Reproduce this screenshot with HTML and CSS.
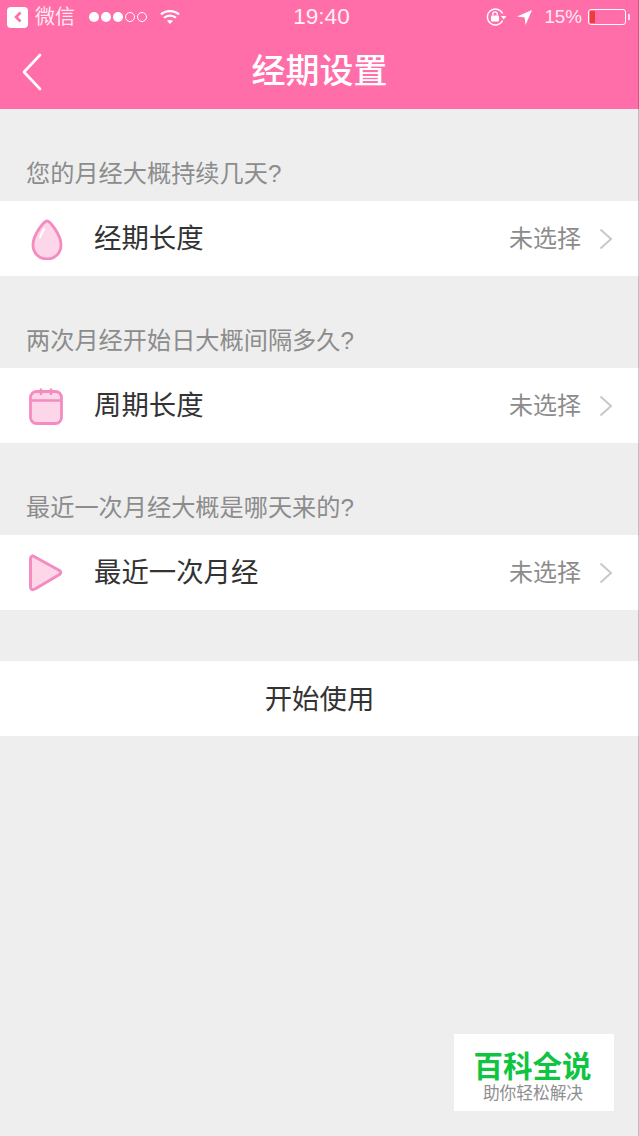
FILE: index.html
```html
<!DOCTYPE html>
<html lang="zh-CN">

<head>
    <meta charset="UTF-8">
    <meta name="viewport" content="width=device-width, initial-scale=1.0">
    <title>经期设置</title>
    <link rel="stylesheet" href="styles.css">
</head>

<body>
    <header class="top">
        <div class="status-bar">
            <div class="status-left">
                <span class="wechat-back">
                    <svg width="12" height="14" viewBox="0 0 12 14"><path d="M8.5 2.5 L4 7 L8.5 11.5" fill="none" stroke="#ff6ea9" stroke-width="2.6" /></svg>
                </span>
                <span class="app-name">微信</span>
                <span class="signal">
                    <i class="dot"></i><i class="dot"></i><i class="dot"></i><i class="dot off"></i><i class="dot off"></i>
                </span>
                <svg class="wifi" width="20" height="16" viewBox="0 0 20 16">
                    <path d="M1 5.4 C5.8 1 14.2 1 19 5.4" fill="none" stroke="#fff" stroke-width="2.2" />
                    <path d="M4 8.8 C7.4 5.8 12.6 5.8 16 8.8" fill="none" stroke="#fff" stroke-width="2.2" />
                    <path d="M7 11.8 C8.6 10.6 11.4 10.6 13 11.8 L10 15 Z" fill="#fff" />
                </svg>
            </div>
            <div class="status-time">19:40</div>
            <div class="status-right">
                <svg width="22" height="20" viewBox="0 0 22 20">
                    <path d="M17.6 6.5 A8 8 0 1 0 17.6 13.5" fill="none" stroke="#fff" stroke-width="1.4" />
                    <path d="M16 9 L21.5 9 L18.7 12.4 Z" fill="#fff" />
                    <rect x="6" y="8.5" width="8" height="6" rx="1" fill="#fff" />
                    <path d="M7.8 8.5 V7 A2.2 2.2 0 0 1 12.2 7 V8.5" fill="none" stroke="#fff" stroke-width="1.3" />
                </svg>
                <svg class="location" width="17" height="17" viewBox="0 0 17 17"><path d="M16 1 L1 7.6 L8.6 8.6 L9.6 16 Z" fill="#fff" /></svg>
                <span class="battery-text">15%</span>
                <span class="battery"><i class="battery-level"></i></span>
                <i class="battery-tip"></i>
            </div>
        </div>
        <nav class="nav-bar">
            <svg class="nav-back" width="24" height="40" viewBox="0 0 24 40"><path d="M20 3 L4 20 L20 37" fill="none" stroke="#fff" stroke-width="2.6" stroke-linecap="round" stroke-linejoin="round" /></svg>
            <h1 class="nav-title">经期设置</h1>
        </nav>
    </header>

    <main>
        <section>
            <p class="question">您的月经大概持续几天?</p>
            <div class="row">
                <svg class="row-icon" width="38" height="42" viewBox="0 0 38 42">
                    <path d="M22 3 C24.5 3 36 16 36 27 C36 35 30 41 22 41 C14 41 8 35 8 27 C8 16 19.5 3 22 3 Z" fill="#fdd6ea" stroke="#f48cc0" stroke-width="2.8" stroke-linejoin="round" />
                    <path d="M19 11 C17.5 13.5 15.8 16.5 15 19.5" fill="none" stroke="#fff" stroke-width="2" stroke-linecap="round" />
                </svg>
                <span class="row-name">经期长度</span>
                <span class="row-value">未选择</span>
                <svg class="chevron" width="14" height="22" viewBox="0 0 14 22"><path d="M1.5 1.5 L12 11 L1.5 20.5" fill="none" stroke="#c8c8c8" stroke-width="2" /></svg>
            </div>
        </section>

        <section>
            <p class="question">两次月经开始日大概间隔多久?</p>
            <div class="row">
                <svg class="row-icon" width="38" height="40" viewBox="0 0 38 40">
                    <rect x="5.5" y="5.5" width="31" height="32" rx="6" fill="#fdd6ea" stroke="#f48cc0" stroke-width="2.8" />
                    <path d="M5.5 14.5 H36.5 M16 2.5 V9 M26 2.5 V9" fill="none" stroke="#f48cc0" stroke-width="2.4" />
                </svg>
                <span class="row-name">周期长度</span>
                <span class="row-value">未选择</span>
                <svg class="chevron" width="14" height="22" viewBox="0 0 14 22"><path d="M1.5 1.5 L12 11 L1.5 20.5" fill="none" stroke="#c8c8c8" stroke-width="2" /></svg>
            </div>
        </section>

        <section>
            <p class="question">最近一次月经大概是哪天来的?</p>
            <div class="row">
                <svg class="row-icon" width="38" height="42" viewBox="0 0 38 42">
                    <path d="M5.5 7 Q5.5 2.5 10 5 L34.5 18.5 Q37 20.5 34.5 22.5 L10 37 Q5.5 39 5.5 35 Z" fill="#fdd6ea" stroke="#f48cc0" stroke-width="3" stroke-linejoin="round" />
                </svg>
                <span class="row-name">最近一次月经</span>
                <span class="row-value">未选择</span>
                <svg class="chevron" width="14" height="22" viewBox="0 0 14 22"><path d="M1.5 1.5 L12 11 L1.5 20.5" fill="none" stroke="#c8c8c8" stroke-width="2" /></svg>
            </div>
        </section>

        <button class="start-btn">开始使用</button>
    </main>

    <div class="watermark">
        <div class="watermark-title">百科全说</div>
        <div class="watermark-sub">助你轻松解决</div>
    </div>
</body>

</html>
```

FILE: styles.css
```css
* {
    margin: 0;
    padding: 0;
    box-sizing: border-box;
}

body {
    font-family: 'Liberation Sans', 'Noto Sans CJK SC', sans-serif;
    background: #eeeeee;
    color: #333;
    min-height: 1136px;
    overflow: hidden;
    position: relative;
}

/* thin grey edge down the right side of the screenshot */
body::after {
    content: '';
    position: absolute;
    top: 0;
    right: 0;
    bottom: 0;
    width: 1px;
    background: rgba(0, 0, 0, 0.2);
}

.top {
    background: #ff6ea9;
    color: white;
    height: 109px;
}

.status-bar {
    height: 34px;
    display: flex;
    align-items: center;
    justify-content: space-between;
    padding: 0 9px 0 7px;
    position: relative;
}

.status-left,
.status-right {
    display: flex;
    align-items: center;
}

.wechat-back {
    width: 21px;
    height: 21px;
    border-radius: 4px;
    background: #fff;
    display: flex;
    align-items: center;
    justify-content: center;
}

.app-name {
    font-size: 20px;
    line-height: 24px;
    margin-left: 7px;
    opacity: 0.85;
}

.signal {
    display: flex;
    gap: 2px;
    margin-left: 14px;
    margin-right: 13px;
}

.dot {
    width: 10px;
    height: 10px;
    border-radius: 50%;
    background: #fff;
}

.dot.off {
    background: none;
    border: 1px solid #fff;
}

.status-time {
    position: absolute;
    left: 4px;
    right: 0;
    text-align: center;
    font-size: 22.5px;
    opacity: 0.9;
}

.status-right svg {
    margin-right: 9px;
}

.status-right .location {
    margin-right: 11px;
}

.battery-text {
    font-size: 18.8px;
    margin-right: 6px;
    opacity: 0.85;
}

.battery {
    width: 38px;
    height: 16px;
    border: 1px solid #fff;
    border-radius: 3px;
    padding: 1px;
    display: block;
}

.battery-level {
    display: block;
    width: 5px;
    height: 100%;
    background: #ee3b3b;
}

.battery-tip {
    width: 2px;
    height: 6px;
    margin-left: 2px;
    background: #fff;
    opacity: 0.8;
}

.nav-bar {
    height: 75px;
    display: flex;
    align-items: center;
    justify-content: center;
    position: relative;
}

.nav-back {
    position: absolute;
    left: 20px;
    top: 18px;
}

.nav-title {
    font-size: 34px;
    font-weight: 500;
    line-height: 1;
    padding-bottom: 2px;
}

.question {
    height: 92px;
    padding: 0 26px 13px;
    display: flex;
    align-items: flex-end;
    font-size: 24.2px;
    line-height: 28px;
    color: #8c8c8c;
}

.row {
    height: 75px;
    background: #fff;
    display: flex;
    align-items: center;
    padding: 0 26px 0 25px;
}

.row-icon {
    flex: none;
}

.row-name {
    font-size: 27.4px;
    line-height: 32px;
    margin-left: 31px;
    flex: 1;
}

.row-value {
    font-size: 24px;
    line-height: 28px;
    color: #8c8c8c;
    margin-right: 18px;
}

.start-btn {
    display: block;
    width: 100%;
    height: 75px;
    margin-top: 51px;
    padding-bottom: 4px;
    background: #fff;
    border: none;
    font-family: inherit;
    font-size: 27.4px;
    color: #333;
}

.watermark {
    position: absolute;
    left: 454px;
    top: 1034px;
    width: 160px;
    height: 77px;
    background: #fff;
    padding: 16px 3px 0 0;
    text-align: center;
}

.watermark-title {
    font-size: 29.5px;
    line-height: 33px;
    font-weight: 700;
    color: #0fc441;
}

.watermark-sub {
    font-size: 16.7px;
    line-height: 20px;
    margin-top: 1px;
    padding-left: 1px;
    color: #8e8e8e;
}
```
